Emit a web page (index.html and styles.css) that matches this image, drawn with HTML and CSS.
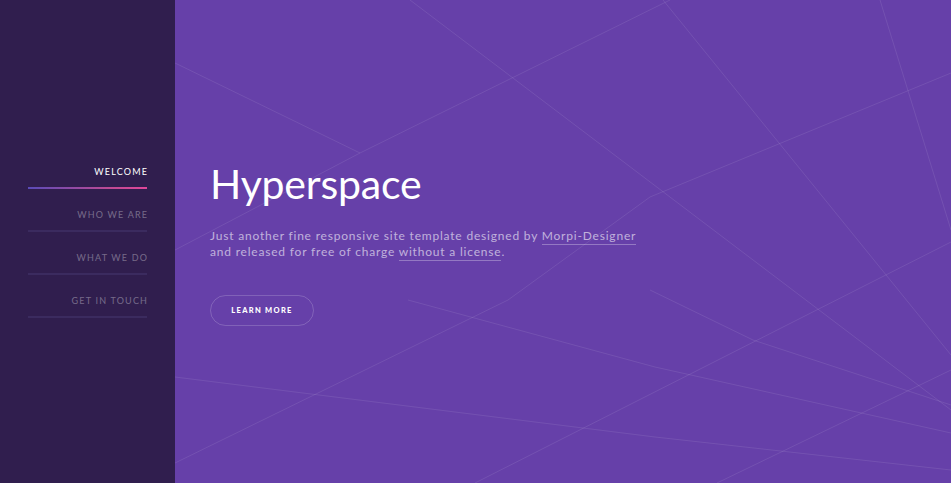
FILE: index.html
```html
<!DOCTYPE html>
<html lang="en">
<head>
<meta charset="utf-8">
<title>Hyperspace</title>
<link rel="stylesheet" href="styles.css">
</head>
<body>
<div class="page">
  <aside class="sidebar">
    <nav class="nav">
      <a class="nav-item active" href="#intro">Welcome</a>
      <a class="nav-item" href="#one">Who we are</a>
      <a class="nav-item" href="#two">What we do</a>
      <a class="nav-item" href="#three">Get in touch</a>
    </nav>
  </aside>
  <main class="intro">
    <svg class="bg-lines" viewBox="0 0 776 483" preserveAspectRatio="none" aria-hidden="true">
      <g fill="none" stroke="rgba(255,255,255,0.09)" stroke-width="1">
        <polyline points="235,0 776,410"/>
        <polyline points="495,0 185,153 0,63"/>
        <polyline points="488,0 776,355"/>
        <polyline points="705,0 776,230"/>
        <polyline points="776,73 475,197 333,300 0,463"/>
        <polyline points="776,242 300,483"/>
        <polyline points="0,377 480,437 776,470"/>
        <polyline points="233,300 480,367 776,433"/>
        <polyline points="475,290 578,340 776,405"/>
        <polyline points="542,483 776,370"/>
        <polyline points="185,153 0,250"/>
      </g>
    </svg>
    <div class="intro-inner">
      <h1 class="title">Hyperspace</h1>
      <p class="lead">Just another fine responsive site template designed by <a class="link" href="#">Morpi-Designer</a><br>and released for free of charge <a class="link" href="#">without a license</a>.</p>
      <a class="button" href="#one">Learn more</a>
    </div>
  </main>
</div>
</body>
</html>
```
FILE: styles.css
```css
* { box-sizing: border-box; }
html, body { margin: 0; padding: 0; height: 100%; }
body {
  font-family: Lato, "Open Sans", sans-serif;
  background: #6640a9;
  overflow: hidden;
}
.page {
  display: flex;
  height: 483px;
}
.sidebar {
  width: 175px;
  flex: none;
  background: #301e4e;
  display: flex;
  flex-direction: column;
  justify-content: center;
  padding: 0 28px 20px 28px;
}
.nav {
  display: flex;
  flex-direction: column;
}
.nav-item {
  display: block;
  text-align: right;
  color: rgba(255,255,255,0.35);
  text-decoration: none;
  text-transform: uppercase;
  font-size: 9px;
  line-height: 10px;
  letter-spacing: 1.2px;
  margin-right: -1.2px;
  padding: 21px 0 0 0;
}
.nav-item::after {
  content: "";
  display: block;
  height: 2px;
  margin-top: 10px;
  margin-right: 1.2px;
  background: #3b2b5f;
}
.nav-item.active { color: #fff; }
.nav-item.active::after {
  background: linear-gradient(to right, #5a4bb8, #c04a93 70%, #e0479a);
}
.intro {
  flex: 1;
  position: relative;
  display: flex;
  flex-direction: column;
  justify-content: center;
  padding: 0 35px;
}
.bg-lines {
  position: absolute;
  left: 0; top: 0;
  width: 100%; height: 100%;
}
.intro-inner {
  position: relative;
  padding-top: 1px;
}
.title {
  margin: 0;
  color: #fff;
  font-weight: 400;
  font-size: 41px;
  line-height: 50px;
  letter-spacing: -0.2px;
}
.lead {
  margin: 19px 0 35px 0;
  color: rgba(255,255,255,0.6);
  font-size: 12px;
  line-height: 16px;
  letter-spacing: 0.8px;
}
.link {
  color: rgba(255,255,255,0.6);
  text-decoration: none;
  border-bottom: 1px solid rgba(255,255,255,0.3);
  padding-bottom: 1px;
}
.button {
  display: inline-flex;
  align-items: center;
  justify-content: center;
  width: 104px;
  height: 31px;
  border-radius: 16px;
  border: 1px solid rgba(255,255,255,0.18);
  color: #fff;
  text-decoration: none;
  text-transform: uppercase;
  font-weight: 900;
  font-size: 7.5px;
  letter-spacing: 1.3px;
}
```
